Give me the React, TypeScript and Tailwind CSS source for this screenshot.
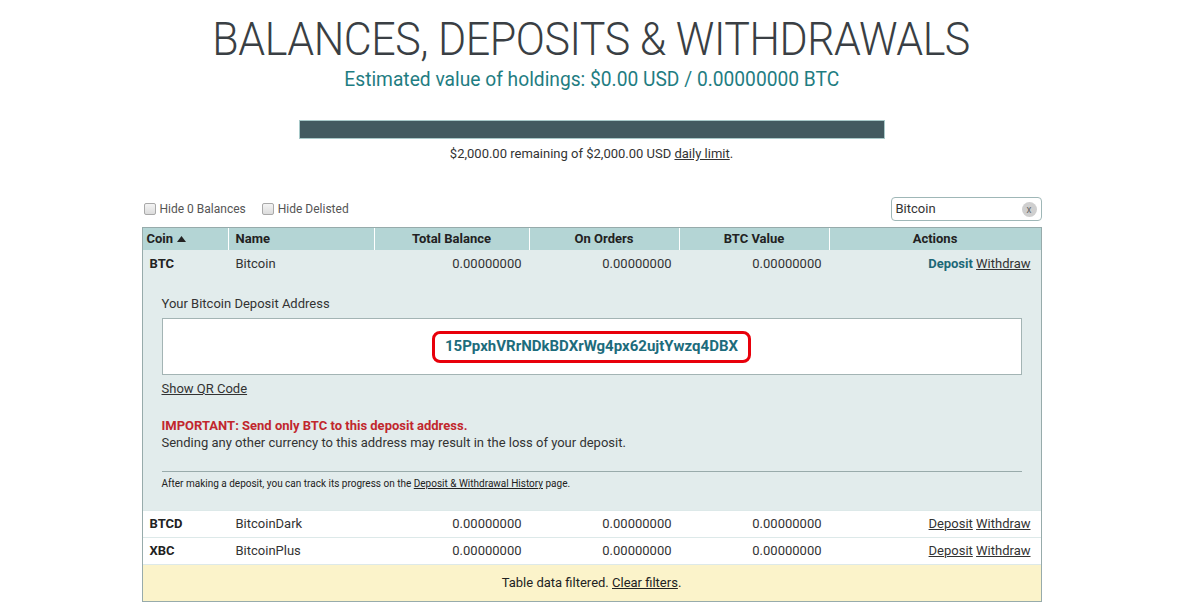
import React from 'react'

const ROWS = [
  { coin: 'BTCD', name: 'BitcoinDark' },
  { coin: 'XBC', name: 'BitcoinPlus' },
]

const ZERO = '0.00000000'

function Checkbox({ label }: { label: string }) {
  return (
    <label className="flex items-center gap-[4px]">
      <span className="w-[12px] h-[12px] rounded-[2px] border border-[#a9a9a9] bg-gradient-to-b from-[#f4f4f4] to-[#dcdcdc]" />
      <span>{label}</span>
    </label>
  )
}

function Actions({ active }: { active?: boolean }) {
  return (
    <div className="text-right pr-[10px]">
      {active ? (
        <span className="font-bold text-[#1d6877]">Deposit</span>
      ) : (
        <span className="underline text-[#333]">Deposit</span>
      )}{' '}
      <span className="underline text-[#333]">Withdraw</span>
    </div>
  )
}

const grid = 'grid grid-cols-[86px_146px_155px_150px_150px_1fr]'

export default function App() {
  return (
    <div className="w-[1200px] h-[607px] bg-white text-[#333] font-['Roboto',sans-serif] text-[13px] overflow-hidden">
      <div className="w-[1183px]">
        {/* heading */}
        <div className="flex flex-col items-center pt-[12px]">
          <h1 className="text-[46px] leading-[54px] font-light text-[#3a3f44] tracking-[-0.5px] origin-center scale-x-[0.935] whitespace-nowrap">
            BALANCES, DEPOSITS &amp; WITHDRAWALS
          </h1>
          <p className="text-[20px] leading-[26px] text-[#1f7d82] scale-x-[0.96] whitespace-nowrap">
            Estimated value of holdings: $0.00 USD / 0.00000000 BTC
          </p>
        </div>

        {/* daily limit */}
        <div className="flex flex-col items-center mt-[28px]">
          <div className="w-[586px] h-[19px] bg-[#435a60] border border-[#a8c9c9]" />
          <p className="mt-[7px] leading-[16px]">
            $2,000.00 remaining of $2,000.00 USD <span className="underline">daily limit</span>.
          </p>
        </div>

        {/* table */}
        <div className="w-[900px] mx-auto mt-[35px]">
          <div className="flex items-center justify-between h-[24px] mb-[6px]">
            <div className="flex items-center gap-[16px] pl-[2px] text-[12px] text-[#555]">
              <Checkbox label="Hide 0 Balances" />
              <Checkbox label="Hide Delisted" />
            </div>
            <div className="w-[151px] h-[24px] rounded-[4px] border border-[#9fb7b7] flex items-center justify-between pl-[4px] pr-[4px]">
              <span className="text-[13px] text-[#333]">Bitcoin</span>
              <span className="w-[15px] h-[15px] rounded-full bg-[#cfcfcf] text-[#666] text-[10px] leading-[15px] text-center">x</span>
            </div>
          </div>

          <div className="border border-[#97abab]">
            {/* header */}
            <div className={`${grid} bg-[#b4d5d5] h-[22px] items-center font-bold text-[#222]`}>
              <div className="pl-[4px] flex items-center gap-[4px] border-r border-white h-full">
                Coin
                <svg width="9" height="6" viewBox="0 0 9 6"><path d="M0 6 L4.5 0 L9 6 Z" fill="#222" /></svg>
              </div>
              <div className="pl-[7px] border-r border-white h-full flex items-center">Name</div>
              <div className="border-r border-white h-full flex items-center justify-center">Total Balance</div>
              <div className="border-r border-white h-full flex items-center justify-center">On Orders</div>
              <div className="border-r border-white h-full flex items-center justify-center">BTC Value</div>
              <div className="h-full flex items-center justify-center">Actions</div>
            </div>

            {/* expanded BTC */}
            <div className="bg-[#e2ecec]">
              <div className={`${grid} h-[27px] items-center`}>
                <div className="pl-[7px] font-bold text-[#222]">BTC</div>
                <div className="pl-[7px]">Bitcoin</div>
                <div className="text-right pr-[8px]">{ZERO}</div>
                <div className="text-right pr-[8px]">{ZERO}</div>
                <div className="text-right pr-[8px]">{ZERO}</div>
                <Actions active />
              </div>
              <div className="px-[19px] pt-[19px] pb-[19px]">
                <p className="leading-[16px]">Your Bitcoin Deposit Address</p>
                <div className="mt-[6px] h-[57px] bg-white border border-[#a3b4b4] flex items-center justify-center">
                  <span className="px-[10px] h-[32px] flex items-center rounded-[8px] border-[3px] border-[#e8000b] font-bold text-[15px] text-[#1d6c7c]">
                    15PpxhVRrNDkBDXrWg4px62ujtYwzq4DBX
                  </span>
                </div>
                <p className="mt-[6px] underline leading-[16px]">Show QR Code</p>
                <p className="mt-[20px] font-bold text-[#c1272d] leading-[17px]">IMPORTANT: Send only BTC to this deposit address.</p>
                <p className="leading-[17px]">Sending any other currency to this address may result in the loss of your deposit.</p>
                <div className="mt-[20px] border-t border-[#99abab]" />
                <p className="mt-[5px] text-[10px] leading-[14px] text-[#222]">
                  After making a deposit, you can track its progress on the <span className="underline">Deposit &amp; Withdrawal History</span> page.
                </p>
              </div>
            </div>

            {ROWS.map((r) => (
              <div key={r.coin} className={`${grid} h-[27px] items-center bg-white border-t border-[#dde9e9]`}>
                <div className="pl-[7px] font-bold text-[#222]">{r.coin}</div>
                <div className="pl-[7px]">{r.name}</div>
                <div className="text-right pr-[8px]">{ZERO}</div>
                <div className="text-right pr-[8px]">{ZERO}</div>
                <div className="text-right pr-[8px]">{ZERO}</div>
                <Actions />
              </div>
            ))}

            <div className="bg-[#fbf3ca] h-[37px] border-t border-[#dde9e9] flex items-center justify-center text-[#222]">
              Table data filtered.&nbsp;<span className="underline">Clear filters</span>.
            </div>
          </div>
        </div>
      </div>
    </div>
  )
}
